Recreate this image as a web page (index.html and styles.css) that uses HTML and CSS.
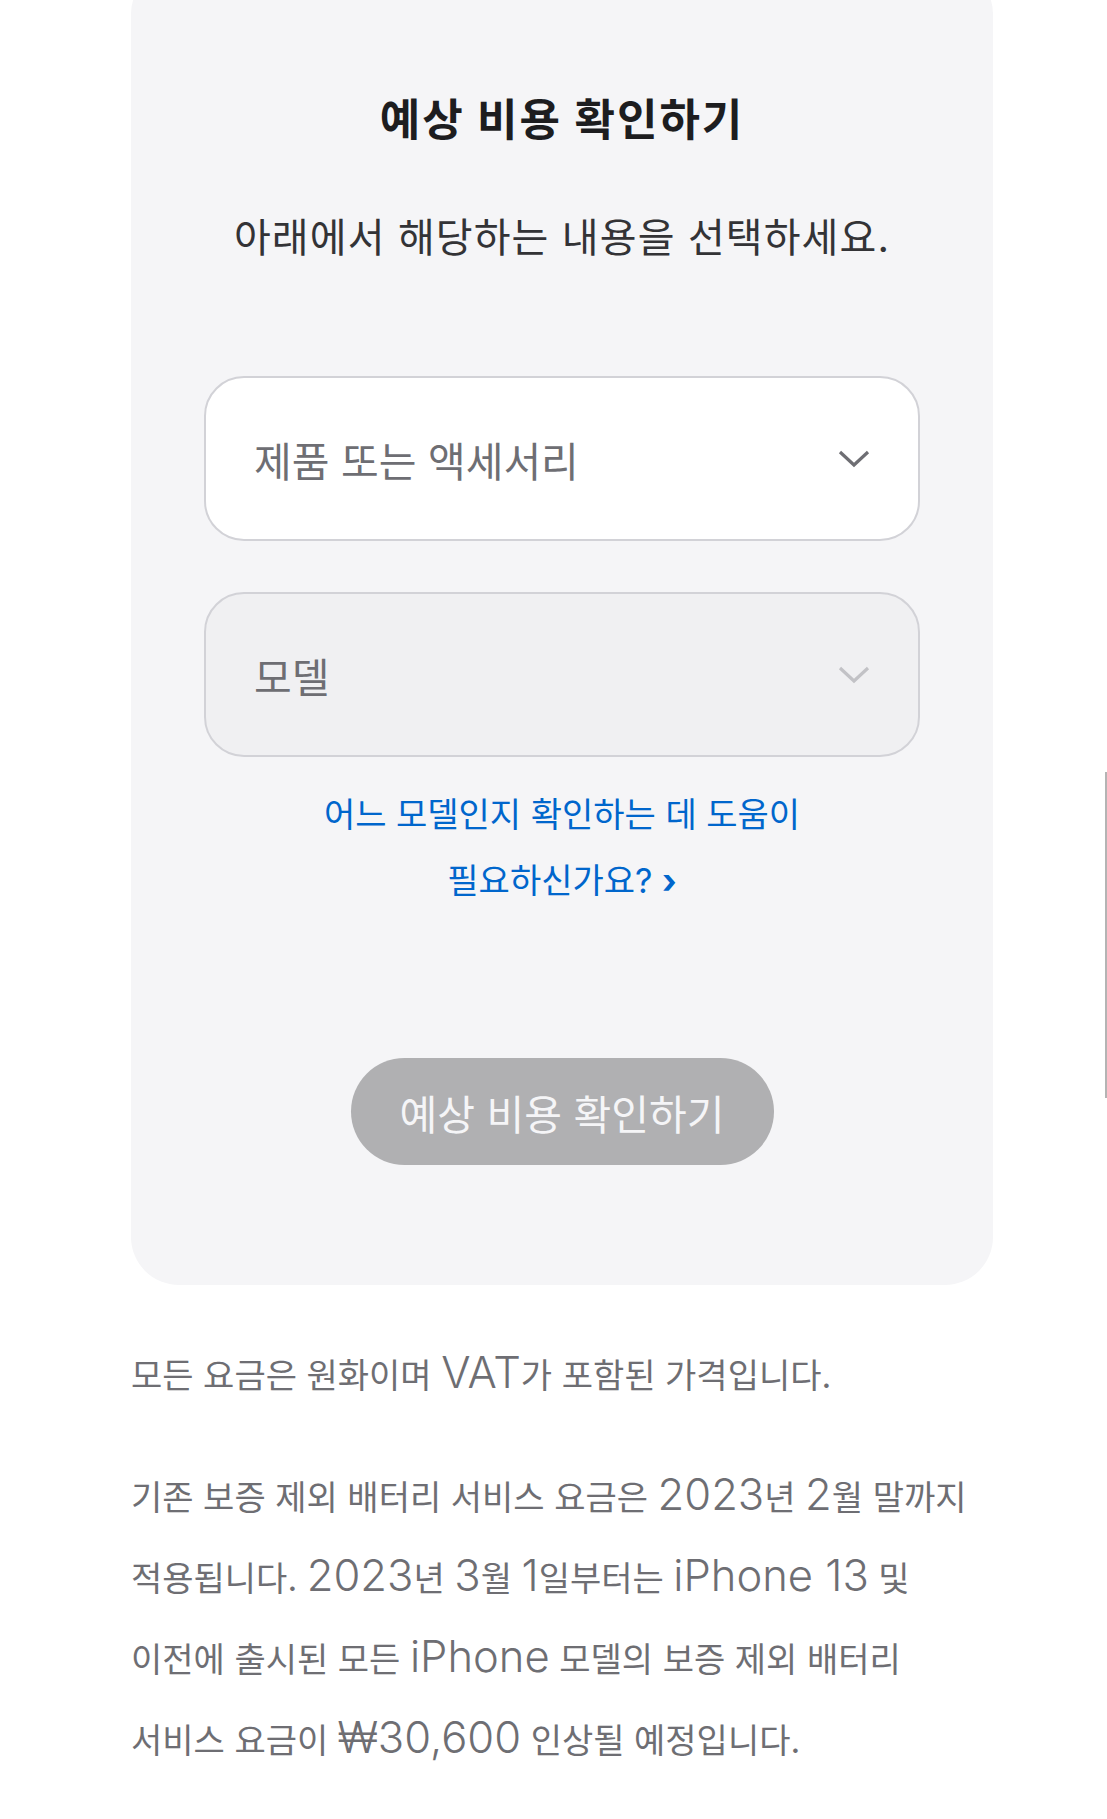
FILE: index.html
```html
<!DOCTYPE html>
<html lang="ko">
<head>
  <meta charset="UTF-8">
  <title>예상 비용 확인하기</title>
  <link rel="stylesheet" href="styles.css">
</head>
<body>
  <div class="page">
    <div class="estimate">
      <h2 class="estimate-title">예상 비용 확인하기</h2>
      <p class="estimate-sub">아래에서 해당하는 내용을 선택하세요.</p>

      <div class="select">
        <span>제품 또는 액세서리</span>
        <svg class="chevron" width="32" height="18" viewBox="0 0 32 18"><path d="M2 2 L16 15 L30 2" fill="none" stroke="currentColor" stroke-width="3.2"/></svg>
      </div>
      <div class="select disabled">
        <span>모델</span>
        <svg class="chevron" width="32" height="18" viewBox="0 0 32 18"><path d="M2 2 L16 15 L30 2" fill="none" stroke="currentColor" stroke-width="3.2"/></svg>
      </div>

      <a class="help-link" href="#">어느 모델인지 확인하는 데 도움이<br>필요하신가요? <span class="arrow">›</span></a>

      <div class="btn-row">
        <button class="btn" disabled>예상 비용 확인하기</button>
      </div>
    </div>

    <p class="note">모든 요금은 원화이며 <span class="en">VAT</span>가 포함된 가격입니다.</p>
    <p class="note">기존 보증 제외 배터리 서비스 요금은 <span class="en">2023</span>년 <span class="en">2</span>월 말까지<br>적용됩니다. <span class="en">2023</span>년 <span class="en">3</span>월 <span class="en">1</span>일부터는 <span class="en">iPhone 13</span> 및<br>이전에 출시된 모든 <span class="en">iPhone</span> 모델의 보증 제외 배터리<br>서비스 요금이 <span class="en">₩30,600</span> 인상될 예정입니다.</p>
  </div>

  <div class="scroll-thumb"></div>
</body>
</html>
```

FILE: styles.css
```css
body {
  margin: 0;
  background: #fff;
  font-family: Inter, "Noto Sans CJK KR", "Noto Sans", sans-serif;
  color: #1d1d1f;
}

.page {
  width: 862px;
  margin-left: 131px;
}

.estimate {
  margin-top: -34px;
  padding: 126px 73px 120px;
  background-color: #f5f5f7;
  border-radius: 48px;
  text-align: center;
}
.estimate-title {
  margin: 0;
  font-size: 44px;
  line-height: 56px;
  font-weight: 700;
  letter-spacing: 2px;
  color: #1d1d1f;
}
.estimate-sub {
  margin: 62px 0 0;
  font-size: 40px;
  line-height: 56px;
  letter-spacing: 1.1px;
  color: #333336;
}

.select {
  display: flex;
  align-items: center;
  justify-content: space-between;
  height: 161px;
  padding: 0 48px 0 48px;
  border: 2px solid #d2d2d7;
  border-radius: 40px;
  background-color: #fff;
  font-size: 41px;
  color: #6e6e73;
  text-align: left;
  margin-top: 110px;
}
.select + .select {
  margin-top: 51px;
}
.select .chevron {
  color: #6e6e73;
}
.select.disabled {
  background-color: #f0f0f2;
}
.select.disabled .chevron {
  color: #c2c2c6;
}

.help-link {
  display: block;
  margin-top: 25px;
  font-size: 34px;
  line-height: 66px;
  color: #0066cc;
  text-decoration: none;
}
.help-link .arrow {
  font-weight: 700;
}

.btn-row {
  margin-top: 144px;
}
.btn {
  width: 423px;
  height: 107px;
  border: none;
  border-radius: 54px;
  background-color: #b0b0b2;
  color: #f5f5f7;
  font-family: inherit;
  font-size: 41px;
}

.note {
  margin: 50px 0 0;
  font-size: 34px;
  line-height: 81px;
  color: #6e6e73;
  word-break: keep-all;
}
.note + .note {
  margin-top: 41px;
}
.note .en {
  font-size: 1.28em;
  font-weight: 300;
  line-height: 1;
}

.scroll-thumb {
  position: absolute;
  top: 772px;
  right: 0;
  width: 2px;
  height: 326px;
  background-color: #b4b4b4;
}
```
